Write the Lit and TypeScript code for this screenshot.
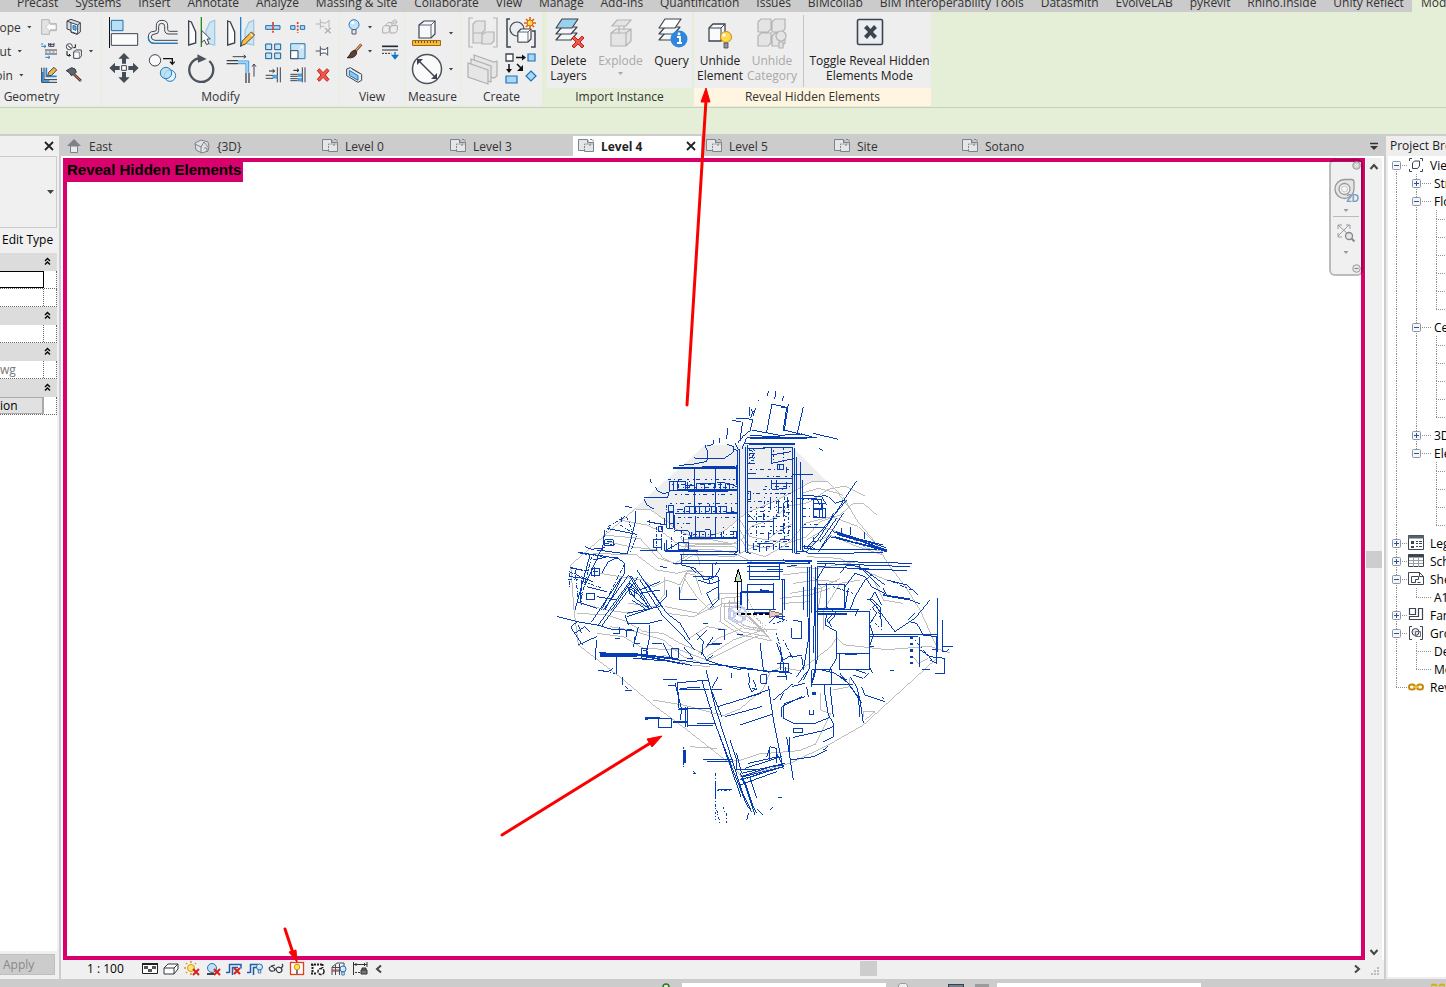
import { LitElement, html, svg, css, nothing } from "lit";
import { customElement, state } from "lit/decorators.js";
import { classMap } from "lit/directives/class-map.js";

type Art = { box: string; size: number; art: unknown };

const cube = (x: number, y: number, s: number, d: number, stroke: string, face: string, top = "#fff") => svg`
  <path d="M${x} ${y + d}l${d} ${-d}h${s}v${s}l${-d} ${d}h${-s}z" fill=${top} stroke=${stroke} stroke-width="1.2" stroke-linejoin="round"/>
  <path d="M${x} ${y + d}h${s}v${s}h${-s}z" fill=${face} stroke=${stroke} stroke-width=".8"/>
  <path d="M${x + s} ${y + d}l${d} ${-d}" stroke=${stroke} stroke-width=".8"/>`;

const sheets = (first: string) => svg`
  <g stroke="#3d4450" stroke-width="1.2" stroke-linejoin="round">
    <path d="M3 23l6-7h15l-6 7z" fill="#f4f6f8"/>
    <path d="M3 17l6-7h15l-6 7z" fill="#f4f6f8"/>
    <path d="M3 11l6-9h16l-6 9z" fill=${first}/>
  </g>`;

const cross = (x: number, y: number, s: number, c = "#d8201c") => svg`
  <path d="M${x} ${y}l${s} ${s}m0 ${-s}l${-s} ${s}" stroke=${c} stroke-width=${s > 6 ? 3 : 2} fill="none"/>`;

const bulb = (x: number, y: number, r: number, c: string, line: string) => svg`
  <circle cx=${x} cy=${y} r=${r} fill=${c} stroke=${line} stroke-width="1"/>
  <path d="M${x - r / 2.4} ${y + r}h${r / 1.2}v${r}h${-r / 1.2}z" fill="#eceff2" stroke=${line} stroke-width=".9"/>
  <circle cx=${x - r / 3} cy=${y - r / 3} r=${r / 3.5} fill="#fff"/>`;

const icons: Record<string, Art> = {
  cope: { box: "117 51 60 60", size: 20, art: svg`<g fill="#e3e3e3" stroke="#b4b4b4" stroke-width="3"><path d="M125 59h23v12h21v21h-21v11h-23z"/><path d="M168 74h-17v-7l-14 14 14 14v-7h17z" fill="#fff" stroke-width="2"/></g>` },
  cutface: { box: "192 51 60 60", size: 20, art: svg`<g stroke="#3d4450" stroke-width="3" stroke-linejoin="round"><path d="M201 63l12-5 28 10v28l-10 7-18-6v-6l-12-4z" fill="#d9dde2"/><path d="M213 68l20 7v27l-20-7z" fill="#fff"/><path d="M219 76l9 3v12l-9-3z" fill="#5fb4f2" stroke="#1b74bb"/><path d="M201 63l12 5M233 75l8-7"/></g>` },
  cut: { box: "117 123 60 60", size: 20, art: svg`<path d="M124 139h14m-5-4l5 4-5 4M136 172h14m-5-4l5 4-5 4" stroke="#1e7fd0" stroke-width="3" fill="none"/><path d="M126 129v6" stroke="#1e7fd0" stroke-width="3"/><path d="M146 129v10h16v-10M146 133h16M152 129v10" stroke="#3d4450" stroke-width="3" fill="none"/><path d="M135 150h36M135 162h36" stroke="#3d4450" stroke-width="3"/><path d="M135 156h36" stroke="#3d4450" stroke-width="2" stroke-dasharray="7 4"/>` },
  joinroof: { box: "192 123 60 60", size: 20, art: svg`<circle cx="208" cy="140" r="9" fill="#fff" stroke="#3d4450" stroke-width="3"/><path d="M203 136l10 9M201 153v13h10m-4-4l4 4-4 4M226 133v10h-6" stroke="#111" stroke-width="3" fill="none"/><path d="M221 156l6-6h17v18l-6 7h-17z" fill="#fff" stroke="#3d4450" stroke-width="3"/><path d="M221 156h17v19" stroke="#3d4450" stroke-width="2" fill="none"/>` },
  join: { box: "117 195 60 60", size: 20, art: svg`<path d="M125 203v44h46M132 203v36h39" stroke="#2a333e" stroke-width="3" fill="none"/><path d="M128 216v27h20M139 203v26h31" stroke="#2386d4" stroke-width="5" fill="none"/><path d="M143 228l3-11 16-15 8 8-15 16z" fill="#f4b64b" stroke="#3d4450" stroke-width="3"/>` },
  demolish: { box: "192 195 60 60", size: 20, art: svg`<path d="M199 212l16-9 10 4 4 10-15 10-5-8z" fill="#5b636e" stroke="#2e353f" stroke-width="3"/><path d="M220 221l23 22" stroke="#5b3b32" stroke-width="8"/><path d="M220 221l23 22" stroke="#c9785b" stroke-width="3"/>` },
  align: { box: "324 51 96 96", size: 32, art: svg`<path d="M328.500 51v93" stroke="#111" stroke-width="3"/><path d="M334 61h35v31h-35z" fill="#b9dff5" stroke="#1e6fae" stroke-width="3"/><path d="M334 101h79v35h-79z" fill="#fafafa" stroke="#3d4450" stroke-width="3"/>` },
  offset: { box: "441 51 96 96", size: 32, art: svg`<g fill="none"><path d="M533 94h-24q-6 0-6-6V77q0-16-17-16t-17 16v13q0 4-7 4-17 0-17 17 0 19 18 19h70" stroke="#414953" stroke-width="3"/><path d="M533 102h-26q-13 0-13-13V79q0-9-9-9t-9 9v13q0 10-11 10-11 0-11 9t11 10h68" stroke="#414953" stroke-width="3"/><path d="M445 111q0 19 18 19h70" stroke="#1e7fbf" stroke-width="4"/></g>` },
  mirror: { box: "558 51 96 96", size: 32, art: svg`<path d="M566 63l8 3 13 30v33l-21 6z" fill="#fcfcfc" stroke="#3d4450" stroke-width="4"/><path d="M644 61l-14 6-12 25v38l26 5z" fill="#cfe6f2" stroke="#9dcbe4" stroke-width="4"/><path d="M604 51v90" stroke="#2e8b1e" stroke-width="4"/><path d="M605 91v37l8-8 7 14 7-4-6-13h10z" fill="#fff" stroke="#3d4450" stroke-width="3"/>` },
  mirrordraw: { box: "675 51 96 96", size: 32, art: svg`<path d="M683 63l8 3 13 30v33l-21 6z" fill="#fcfcfc" stroke="#3d4450" stroke-width="4"/><path d="M761 61l-14 6-12 25v38l26 5z" fill="#cfe6f2" stroke="#9dcbe4" stroke-width="4"/><path d="M722 51v90" stroke="#1e7fd0" stroke-width="4"/><path d="M722 138l5-15 27-27 10 9-28 27z" fill="#f7c046" stroke="#5b3d1e" stroke-width="3"/><path d="M750 100l9 9" stroke="#fff" stroke-width="3"/>` },
  move: { box: "324 159 96 96", size: 32, art: svg`<path d="M372 159l17 17h-11v15h-12v-15h-11zM372 249l17-17h-11v-16h-12v16h-11zM328 204l17-16v10h14v12h-14v10zM416 204l-17-16v10h-14v12h14v10z" fill="#434b56"/><path d="M365 197h14v14h-14z" fill="#fff" stroke="#3d4450" stroke-width="3"/>` },
  copy: { box: "441 159 96 96", size: 32, art: svg`<circle cx="465" cy="181" r="17" fill="#fafafa" stroke="#3d4450" stroke-width="3"/><path d="M489 176h28v14m-7-5l7 8 7-8" fill="none" stroke="#111" stroke-width="4"/><circle cx="510" cy="227" r="17" fill="#e5f4fc" stroke="#1e7fbf" stroke-width="3"/><circle cx="498" cy="219" r="17" fill="#b5dcf2" fill-opacity=".8" stroke="#1e7fbf" stroke-width="3"/>` },
  rotate: { box: "558 159 96 96", size: 32, art: svg`<path d="M594 175a36 36 0 1 0 34 8" fill="none" stroke="#4b535e" stroke-width="7"/><path d="M592 163l28 14-26 11z" fill="#4b535e"/>` },
  trimcorner: { box: "675 159 96 96", size: 32, art: svg`<path d="M680 182h34M680 191h34M738 218v31M747 218v31" stroke="#3d4450" stroke-width="4"/><path d="M714 183h32v35M714 191h24v27" fill="none" stroke="#2b8ede" stroke-width="3"/><path d="M714 187h28v31" fill="none" stroke="#9fd2f6" stroke-width="5"/><path d="M698 170h40m-7-5l7 5-7 5M762 230v-37m-6 7l6-8 6 8" fill="none" stroke="#3d4450" stroke-width="3"/>` },
  split: { box: "794 51 60 60", size: 20, art: svg`<path d="M802 77h43v11h-43z" fill="#b5dcf2" stroke="#1e6fae" stroke-width="3"/><path d="M824 66v32" stroke="#e23a2c" stroke-width="5" stroke-dasharray="10 3"/>` },
  splitgap: { box: "870 51 60 60", size: 20, art: svg`<path d="M878 77h13v11h-13zM907 77h13v11h-13z" fill="#b5dcf2" stroke="#1e6fae" stroke-width="3"/><path d="M899 66v32" stroke="#e23a2c" stroke-width="5" stroke-dasharray="6 4"/>` },
  unpin: { box: "944 51 60 60", size: 20, art: svg`<path d="M952 72h14M966 58v28M966 66l10 3h8l8-9v24M966 79h12" fill="none" stroke="#b7b7b7" stroke-width="3"/><path d="M980 84l17 16m0-16l-17 16" stroke="#b0b0b0" stroke-width="4"/>` },
  array: { box: "794 123 60 60", size: 20, art: svg`<path d="M802 132h18v17h-18zM829 132h18v17h-18zM802 159h18v17h-18zM829 159h18v17h-18z" fill="#c5e5f7" stroke="#1b5f93" stroke-width="3"/>` },
  scale: { box: "870 123 60 60", size: 20, art: svg`<path d="M878 131h43v45h-43z" fill="#c5e5f7" stroke="#2b7cb5" stroke-width="3"/><path d="M878 152h22v24h-22z" fill="#fff" stroke="#2b4860" stroke-width="3"/><path d="M904 148l10-10m-8 0h8v8" fill="none" stroke="#fff" stroke-width="3"/>` },
  pin: { box: "944 123 60 60", size: 20, art: svg`<path d="M952 153h14M966 139v29M966 146l8 2h8l6-7v25l-6-7h-8l-8 2" fill="#fff" stroke="#4b535e" stroke-width="3"/>` },
  trim1: { box: "794 195 60 60", size: 20, art: svg`<path d="M802 226h22M802 235h22M837 202v45M846 202v45" stroke="#3d4450" stroke-width="3"/><path d="M824 226h13v8h-13z" fill="#5cb0f0" stroke="#1e7fd0" stroke-width="2"/><path d="M812 213h16m-5-5l6 5-6 5" fill="none" stroke="#222" stroke-width="3"/>` },
  trim2: { box: "870 195 60 60", size: 20, art: svg`<path d="M877 223h22M877 229h22M877 236h22M877 242h22M913 202v45M921 202v45" stroke="#3d4450" stroke-width="3"/><path d="M900 222h12v7h-12zM900 236h12v7h-12z" fill="#5cb0f0" stroke="#1e7fd0" stroke-width="2"/><path d="M886 211h16m-5-5l6 5-6 5" fill="none" stroke="#222" stroke-width="3"/>` },
  remove: { box: "944 195 60 60", size: 20, art: svg`<path d="M957 212l6-6 11 12 12-12 6 6-11 13 11 13-6 6-12-12-11 12-6-6 11-13z" fill="#f0564b" stroke="#c3221b" stroke-width="3"/>` },
  hide: { box: "1034 51 60 60", size: 20, art: svg`<circle cx="1064" cy="74" r="15" fill="#c3e2f8" stroke="#2c78c9" stroke-width="3"/><circle cx="1060" cy="68" r="5" fill="#fff"/><path d="M1058 89h12v13h-12z" fill="#e7eaee" stroke="#545c67" stroke-width="3"/>` },
  override: { box: "1034 123 60 60", size: 20, art: svg`<path d="M1086 133l-19 22" stroke="#6b3a22" stroke-width="8"/><path d="M1085 134l-18 20" stroke="#f0a65e" stroke-width="4"/><path d="M1067 150q-12 3-16 14-3 8-8 9 18 3 26-7 5-7 2-12z" fill="#5b4034" stroke="#362821" stroke-width="3"/>` },
  cutprofile: { box: "1034 195 60 60", size: 20, art: svg`<path d="M1042 207l11-4 34 20v18l-11 6-34-20z" fill="#eef0f3" stroke="#3d4450" stroke-width="3"/><path d="M1050 211l26 16v14l-26-15z" fill="#8cc8f2" stroke="#1b74bb" stroke-width="3"/><path d="M1058 207l22 13" stroke="#3d4450" stroke-width="2"/>` },
  displace: { box: "1140 51 60 60", size: 20, art: svg`<g fill="#ececec" stroke="#adadad" stroke-width="3"><path d="M1158 74l6-6h12v12h-18z"/><path d="M1148 82l6-5h14v15l-5 7h-15z"/><path d="M1170 82l6-5h16v15l-6 7h-16z"/></g><circle cx="1184" cy="66" r="5" fill="none" stroke="#b5b5b5" stroke-width="6" stroke-dasharray="3 2"/>` },
  linework: { box: "1140 123 60 60", size: 20, art: svg`<path d="M1146 139h48" stroke="#222a33" stroke-width="5"/><path d="M1146 150h48" stroke="#222a33" stroke-width="3"/><path d="M1146 160h28" stroke="#222a33" stroke-width="3" stroke-dasharray="6 3"/><path d="M1185 156v16m-8-6l8 10 8-10z" stroke="#1274c4" stroke-width="4" fill="#1274c4"/>` },
  measure: { box: "0 0 32 32", size: 32, art: svg`<path d="M8 8l5-4h11v13l-4 4H8z" fill="#f7f8fa" stroke="#3d4450" stroke-width="1.200"/><path d="M8 8h12v13M20 8l4-4" fill="none" stroke="#3d4450" stroke-width=".8"/><path d="M1.500 23.500h28v5h-28z" fill="#f4bb3c" stroke="#a26a0b" stroke-width="1"/><path d="M4.500 24v2m3-2v2m3-2v2m3-2v2m3-2v2m3-2v2m3-2v2m3-2v2" stroke="#7a4f08"/>` },
  dimension: { box: "0 0 32 32", size: 32, art: svg`<circle cx="16" cy="16" r="14.500" fill="#fafafa" stroke="#4b535e" stroke-width="1.500"/><path d="M7 7l18 18" stroke="#3d4450" stroke-width="1.500"/><path d="M6 6h6l-6 6zM26 26h-6l6-6z" fill="#3d4450"/>` },
  group: { box: "0 0 32 32", size: 32, art: svg`<g fill="#e4e4e4" stroke="#b4b4b4" stroke-width="1.200"><path d="M6 1H2v29h4M26 1h4v29h-4" fill="none"/><path d="M6 7l3-3h9v9l-3 3H6zM6 16h9v10H6zM16 17l3-2h8v9l-3 3h-9V17z"/></g>` },
  creategroup: { box: "0 0 32 32", size: 32, art: svg`<path d="M5 2H2v28h4M27 14h3v16h-4" fill="none" stroke="#3d4450" stroke-width="1.500"/><circle cx="12" cy="12" r="7" fill="#e9edf1" stroke="#3d4450" stroke-width="1.200"/>${cube(13, 12, 10, 3, "#3d4450", "#f9fafb")}<g stroke="#e2600c" stroke-width="1.600"><path d="M25 0v12M19 6h12M21 2l8 8M29 2l-8 8"/></g><circle cx="25" cy="6" r="3" fill="#ffd84d" stroke="#e2600c"/>` },
  assembly: { box: "0 0 32 32", size: 32, art: svg`<g fill="#e6e6e6" stroke="#b0b0b0" stroke-width="1.200"><path d="M7 2l20 7 3-1v15l-3 2L8 19z"/><path d="M4 6l20 7v16L4 22z"/><path d="M1 10l20 7v14L1 24z"/></g>` },
  similar: { box: "0 0 32 32", size: 32, art: svg`<path d="M1 1h7v7H1z" fill="#fff" stroke="#3d4450" stroke-width="1.300"/><path d="M23 1h7v7h-7zM1 23h11v7H1zM26 18l5 5-5 5-5-5z" fill="#a9d6f2" stroke="#1b74bb" stroke-width="1.200"/><path d="M11 4.500h7M4 11v6M12 11l5 5" stroke="#111" stroke-width="1.500"/><path d="M17 1.500l4 3-4 3zM1 16h6l-3 4zM18 12v6h-6z" fill="#111"/>` },
  deletelayers: { box: "0 0 32 32", size: 32, art: svg`${sheets("#9bd0ee")}<path d="M19 21l2-2 4 4 4-4 2 2-4 4 4 4-2 2-4-4-4 4-2-2 4-4z" fill="#f0564b" stroke="#c3221b"/>` },
  explode: { box: "0 0 32 32", size: 32, art: svg`<g fill="#e4e4e4" stroke="#b4b4b4" stroke-width="1.200"><path d="M7 9l5-6h14l-5 6z"/><path d="M6 16l5-4h15v12l-5 5H6zM6 16h15v13M21 16l5-4M14 9v7M19 9v4"/></g>` },
  query: { box: "0 0 32 32", size: 32, art: svg`${sheets("#fff")}<circle cx="23" cy="22" r="8.500" fill="#2f86dd"/><path d="M21 20h3v6m-3 0h5" stroke="#fff" stroke-width="2" fill="none"/><circle cx="23" cy="17" r="1.400" fill="#fff"/>` },
  unhide: { box: "0 0 32 32", size: 32, art: svg`<path d="M5 11l4-4h12v12l-4 5H5z" fill="#f9fafb" stroke="#3d4450" stroke-width="1.300"/><path d="M5 11h12v13M17 11l4-4" fill="none" stroke="#3d4450"/><circle cx="22" cy="20" r="5.500" fill="#ffd94f" stroke="#c98b10"/><circle cx="20" cy="18" r="1.800" fill="#fff"/><path d="M20 26h4v5h-4z" fill="#8f969f" stroke="#3d4450" stroke-width=".8"/>` },
  unhidecat: { box: "0 0 32 32", size: 32, art: svg`<g fill="#e4e4e4" stroke="#b4b4b4" stroke-width="1.200"><path d="M2 5l3-3h10v10l-3 3H2zM16 5l3-3h10v10l-3 3H16zM2 19l3-3h10v10l-3 3H2zM16 19l3-3h10v10l-3 3H16z"/><circle cx="25" cy="19" r="5"/><path d="M23 25h4v6h-4z"/></g>` },
  toggle: { box: "0 0 32 32", size: 32, art: svg`<rect x="3.500" y="2.500" width="25" height="25" rx="1.500" fill="#e9eef3" stroke="#3d4450" stroke-width="1.600"/><path d="M10 11l3-3 3.500 4L20 8l3 3-4 4 4 4-3 3-3.500-4-3.500 4-3-3 4-4z" fill="#3d4450"/>` },
  house: { box: "0 0 16 16", size: 16, art: svg`<path d="M8 1l7 7H1z" fill="#7e8288"/><path d="M4.500 8h7v6.500h-7z" fill="#e8eaec" stroke="#7e8288"/>` },
  box3d: { box: "0 0 16 16", size: 16, art: svg`<path d="M1 5l6-3 7 2 1 4-1 5-6 2-6-3z" fill="#dfe2e5" stroke="#7e8288"/><path d="M1 6l6 3 3-5 4 5M7 9v6M10 10h3v4" fill="none" stroke="#7e8288"/>` },
  plan: { box: "0 0 16 16", size: 16, art: svg`<path d="M.5 1.500h9v3h6v9h-9v-1h-6z" fill="#e3e5e7" stroke="#7e838a"/><path d="M6.500 13v-7h9M10 2v3M12 1.500h3v3M12 8v-2" fill="none" stroke="#7e838a" stroke-dasharray="2 1"/>` },
  views: { box: "0 0 16 16", size: 16, art: svg`<path d="M4 1.500H1.500V4M1.500 12v2.500H4M12 1.500h2.500V4M14.500 12v2.500H12" stroke="#3d4450" fill="none"/><path d="M4.500 6l2-2h5v5l-2 2.500h-5z" fill="#fff" stroke="#3d4450"/>` },
  legend: { box: "0 0 16 16", size: 16, art: svg`<path d="M.5.500h15v14H.5z" fill="#fff" stroke="#3d4450"/><path d="M0 2h16" stroke="#59616d" stroke-width="3"/><path d="M3 6h3v3H3zM3 11h3v2H3z" fill="#3d4450"/><path d="M8 6.500h2m1 0h3M8 8.500h2m1 0h3M8 11.500h2m1 0h3" stroke="#3d4450"/>` },
  schedule: { box: "0 0 16 16", size: 16, art: svg`<path d="M.5 1.500h15v12H.5z" fill="#fff" stroke="#3d4450"/><path d="M0 3h16" stroke="#3d4450" stroke-width="3"/><path d="M1 7.500h14M1 10.500h14M5.500 4v10M10.500 4v10" stroke="#9aa0a8"/>` },
  sheet: { box: "0 0 16 16", size: 16, art: svg`<path d="M.5 1.500h11l4 4v8H.5z" fill="#fff" stroke="#3d4450"/><path d="M11.500 1v4.500h4M3.500 5.500v6h4v-3h3v-3zM9.500 11.500h3" fill="none" stroke="#3d4450"/>` },
  family: { box: "0 0 16 16", size: 16, art: svg`<path d="M1.500 1.500h6v6h-6zM10.500 1.500h4v11h-13v-3h9z" fill="#fff" stroke="#3d4450" stroke-width="1.200"/>` },
  groups: { box: "0 0 16 16", size: 16, art: svg`<path d="M4 1.500H1.500v13H4M12 1.500h2.500v13H12" fill="none" stroke="#3d4450"/><circle cx="7.500" cy="7" r="3.500" fill="#e3e7ea" stroke="#3d4450"/><path d="M7.500 6.500h5v5h-5z" fill="none" stroke="#6a717b"/>` },
  link: { box: "0 0 16 16", size: 16, art: svg`<g fill="none" stroke="#c88a0d" stroke-width="2"><rect x="1" y="5.500" width="6" height="5" rx="2.500"/><rect x="9" y="5.500" width="6" height="5" rx="2.500"/><path d="M5 8h6" stroke="#f2bd35"/></g>` },
  detail: { box: "0 0 16 16", size: 16, art: svg`<path d="M.5 2.500h15v10H.5z" fill="#fff" stroke="#222"/><path d="M0 3h16" stroke="#222" stroke-width="2"/><path d="M2 5h4v3H2zM10 5h4v3h-4zM6 8h4v3H6z" fill="#555"/>` },
  style: { box: "0 0 16 16", size: 16, art: svg`<path d="M1 7l4-4h10v5l-4 5H1z" fill="#fff" stroke="#333a45"/><path d="M1 7h10v6M11 7l4-4" fill="none" stroke="#333a45"/>` },
  sun: { box: "0 0 16 16", size: 16, art: svg`<circle cx="7" cy="7" r="3.500" fill="#ffe77e" stroke="#d79410"/><path d="M7 0v2M7 12v2M0 7h2M2 2l1 1M12 2l-1 1M2 12l1-1" stroke="#d79410" stroke-width="1.500"/>${cross(9, 8, 6)}` },
  shadow: { box: "0 0 16 16", size: 16, art: svg`<circle cx="7" cy="7" r="4.500" fill="#bfe0f7" stroke="#2b6fae"/><path d="M2 13h7" stroke="#444" stroke-width="2"/>${cross(9, 8, 6)}` },
  crop: { box: "0 0 16 16", size: 16, art: svg`<path d="M0 11.500h3M3.500 3v9M3 3.500h12v4M6.500 14V6.500H12" fill="none" stroke="#1d5ea8" stroke-width="1.500"/>${cross(8, 7, 6)}` },
  cropshow: { box: "0 0 16 16", size: 16, art: svg`<path d="M0 11.500h3M3.500 3v9M3 3.500h8M6.500 14V6.500H10" fill="none" stroke="#1d5ea8" stroke-width="1.500"/>${bulb(12.500, 6, 3, "#cfe6fa", "#2b6fae")}` },
  glasses: { box: "0 0 16 16", size: 16, art: svg`<path d="M1 7q3-3 5 0 2 3-1 3-3 1-4-3M8 8q1-3 5-1 2 2 0 4-4 2-5-3M6 8h2M3 5l4-1M13 7q3-2 1-4" fill="none" stroke="#333a45" stroke-width="1.200"/>` },
  reveal: { box: "0 0 16 16", size: 16, art: svg`<rect x="1.500" y="1.500" width="13" height="12" fill="#fff" stroke="#e2401c" stroke-width="1.300"/><circle cx="8" cy="6" r="2.800" fill="#ffe35a" stroke="#d79410"/><path d="M8 9v4" stroke="#777" stroke-width="2"/>` },
  frame: { box: "0 0 16 16", size: 16, art: svg`<path d="M1 3.500h12M2.500 3v9M1 12.500h6M12.500 3v4" stroke="#222" stroke-width="2" stroke-dasharray="2 1"/><path d="M4 5h7v6H4z" fill="#fff"/><circle cx="11" cy="10.500" r="3" fill="#fff" stroke="#222" stroke-width="1.500" stroke-dasharray="3 1"/>` },
  analytic: { box: "0 0 16 16", size: 16, art: svg`<path d="M1 14V6l5-4h7v3M1 6.500h9M4.500 4v10M8.500 3v11M1 10h8" fill="none" stroke="#444c57"/><path d="M1 9h7" stroke="#d33"/>${bulb(12, 8, 3, "#cfe6fa", "#2b6fae")}` },
  constrain: { box: "0 0 16 16", size: 16, art: svg`<path d="M1.500 1v13M15 1v5M1 3.500h14M4 2v3M12.500 2v3" stroke="#333" fill="none"/><path d="M3 11.500h5" stroke="#333" stroke-dasharray="2 1"/><path d="M9 9h6v4H9zM10 9V7h4v2" fill="#777" stroke="#333"/>` },
  wheel: { box: "0 0 28 28", size: 28, art: svg`<path d="M3 12A9.500 9.500 0 0 1 12.500 2.500h7a2.500 2.500 0 0 1 2.500 2.500v7a9.500 9.500 0 0 1-19 0z" fill="#e6e6e6" stroke="#999" stroke-width="1.300"/><circle cx="12.500" cy="12" r="5.500" fill="#f6f6f6" stroke="#999" stroke-width="1.300"/><circle cx="12.500" cy="12" r="3" fill="none" stroke="#c4c4c4"/>` },
  zoomfit: { box: "0 0 20 20", size: 20, art: svg`<path d="M2 2l12 11M13 2L2 13M2 6V2h4M10 2h4v4M2 10v4h4" fill="none" stroke="#9a9a9a"/><circle cx="13" cy="13" r="3.500" fill="#dfe6ee" stroke="#888" stroke-width="1.300"/><path d="M15.500 15.500l3 3" stroke="#888" stroke-width="2"/>` },
};

const icon = (name: string) => {
  const i = icons[name];
  return html`<svg viewBox=${i.box} width=${i.size} height=${i.size} aria-hidden="true" fill="none">${i.art}</svg>`;
};

const ribbonTabs = ["Precast", "Systems", "Insert", "Annotate", "Analyze", "Massing & Site", "Collaborate", "View", "Manage", "Add-Ins", "Quantification", "Issues", "BIMcollab", "BIM Interoperability Tools", "Datasmith", "EvolveLAB", "pyRevit", "Rhino.Inside", "Unity Reflect"];

const docTabs = [
  { label: "East", icon: "house" }, { label: "{3D}", icon: "box3d" }, { label: "Level 0", icon: "plan" },
  { label: "Level 3", icon: "plan" }, { label: "Level 4", icon: "plan" }, { label: "Level 5", icon: "plan" },
  { label: "Site", icon: "plan" }, { label: "Sotano", icon: "plan" },
];

/* Guide codes: v line, t tee, l elbow, b blank, + / - expander; "first" and "last" trim the line above or below */
type Node = { guides: string[]; label?: string; icon?: string };
const kids = (n: number, mid: string): Node[] =>
  Array.from({ length: n }, (_, i) => ({ guides: ["v", mid, i === n - 1 ? "l" : "t"] }));
const tree: Node[] = [
  { guides: ["-first"], label: "Views", icon: "views" },
  { guides: ["v", "+"], label: "Structural Plans" },
  { guides: ["v", "-"], label: "Floor Plans" },
  ...kids(6, "v"),
  { guides: ["v", "-"], label: "Ceiling Plans" },
  ...kids(5, "v"),
  { guides: ["v", "+"], label: "3D Views" },
  { guides: ["v", "-last"], label: "Elevations" },
  ...kids(4, "b"),
  { guides: ["+"], label: "Legends", icon: "legend" },
  { guides: ["+"], label: "Schedules", icon: "schedule" },
  { guides: ["-"], label: "Sheets", icon: "sheet" },
  { guides: ["v", "l"], label: "A101" },
  { guides: ["+"], label: "Families", icon: "family" },
  { guides: ["-"], label: "Groups", icon: "groups" },
  { guides: ["v", "t"], label: "Detail" },
  { guides: ["v", "l"], label: "Model" },
  { guides: ["l"], label: "Revit Links", icon: "link" },
];

const guide = (g: string, depth: number) => {
  const sign = g[0] === "+" || g[0] === "-";
  const top = g !== "b" && !g.includes("first");
  const bottom = g !== "b" && g !== "l" && !g.includes("last");
  return html`<svg class="guide" viewBox="0 0 20 18" width="20" height="18" aria-hidden="true">
    <g stroke="#8f8f8f" stroke-dasharray="1 1" fill="none">
      ${top ? svg`<path d="M8.500 0v9"/>` : nothing}
      ${bottom ? svg`<path d="M8.500 9v9"/>` : nothing}
      ${g !== "v" && g !== "b" ? svg`<path d=${depth ? "M8 9.500h15" : "M8 9.500h12"}/>` : nothing}
    </g>
    ${sign ? svg`<rect x="4.500" y="5.500" width="8" height="8" rx="1" fill="#f5f6f7" stroke="#8a94a3"/>
      <path d="M6 9.500h5" stroke="#2850a8"/>${g[0] === "+" ? svg`<path d="M8.500 7v5" stroke="#2850a8"/>` : nothing}` : nothing}
  </svg>`;
};

const siteMap = svg`
  <g transform="scale(.33333)" stroke-width="3" fill="none">
    <path fill="#eeeeee" d="M465 195H735v15l97 95h-47l-65 35-55 28-75 30-70 57-50 17-55-6-35-18-35-28-45-32h-45l-43 35z"/>
    <g stroke="#bdbdbd">
      <path d="M62 555L255 387L300 388L345 420L380 448L415 466L470 472L520 455L590 398L665 368L720 340L785 305L832 305L880 350L920 420L970 480L1020 560L1070 625L1110 690L1160 800L1160 835L940 1035L835 1095L720 1150L570 1190"/>
      <path d="M62 555L72 690L85 795L215 895L310 975L405 1045L545 1155L575 1190"/>
      <path d="M210 420l80 15 45 20 60 45 40-5 110-2 30-15 30-40 60-20 50-40 60-10 60-40 50-10 60 30"/>
      <path d="M160 465l110 10 55 60 50 15 40-25M170 485l70 15 80 10 20 25 40 20 50-30 120 5 60-30 60-20 40 10 60-20 40-45 60-20 40-35h30l40 35"/>
      <path d="M130 520l130 5 60 45 60 10 40-10 60 25M150 580l60 10 70 10 30 20 40-20 40 15 20-40h50"/>
      <path d="M570 420l30 50 50 10 40-30 40-20M570 450l25 45 60 10 60-40M575 480l20 35 50 15 70-40 50-60 80-20 80 30 60 60M755 340l50-15 60 15 45 60"/>
      <path d="M400 480h90l60 12M400 490h160M405 500h150l20 20M400 508h80l70 10 60 30M440 515l10 40M430 455l-30 60v20M390 470l20 30 30 15"/>
      <path d="M770 480l60-35 60 20 60 40 50 10M770 500l70-35 70 30 90 30M770 530l100 5 80 40 60 25M720 560l80 5 120-20M730 610l70-10 60 5M720 640l90-15 60-30M700 585l80-10M690 655l90-10 60-20M700 670l80-5"/>
      <path d="M400 590l40 60 40 40 40-20M390 640l20-60 25 5 20 60M345 590v50l-30 40-80-10M345 680l100 20 60-50M510 660v-20h60M515 670h55M520 680h50"/>
      <path d="M570 650l-55 5-5 70 60 40 60 10 35 8-75-75M575 665l-50 5v50l50 35 80 15-60-60M580 680l-45 5v30l50 30 60 10-50-50M590 695l-40 5v15l40 25 40 5M540 660v60M555 655v15"/>
      <path d="M80 700l90 5 60 20 50 30 60 5 50 30 70 30M140 760l80 10 60 35 110 5 80 30M180 740l60 10 100 30 60 50 60 20M350 700l80 10 60-30M90 670l80 20 70 10"/>
      <path d="M470 830l80-50 90-30 40 0M475 840l120-60 35-15M445 820l60-45 70-30M480 860l-60-5-80-30M410 780l60-40 60 10"/>
      <path d="M310 960l90 15 120 32 50-20 70-60 20-50 30-15 60 10 90-70 20-28 20 20 130 15 130-10 60 20"/>
      <path d="M812 940l0 50 30 12-20 38-25 52-50 20-120 10-60 20M850 930l50-10v-25M940 1010v-15h35l-30 25M570 1140l-30 5"/>
      <path d="M930 600l-60 10-30 50-20 30v60M790 590l25 35-10 60M970 600l30 60 60 10M1090 830l15 20 30-15M420 1100l80 5"/>
      <path d="M585 640l40 80 30 40M590 690l60 50M575 715l70 30M580 735l50 15" stroke-dasharray="3 3"/>
    </g>
    <g stroke="#063cb4">
      <path d="M598 80v28M604 88l8 20M610 92l-8 22M616 85l-6 22M547 121l25 5M558 114l50 4M578 125l-8 57M608 120l-8 32-20 16-16 20M533 145l-3 32M490 180v12M508 175v14M655 32l-3 17M678 34l-4 22M700 48l-3 14M625 62h2"/>
      <path d="M666 72l44 10-10 68M666 72l-17 88M715 72l-12 78M760 80l-18 80M605 150l85 16 65-4M600 166l90 5M700 150l85 20M790 160l75 18M590 172h210M600 176h170M808 204l12 11M692 82l12 2"/>
      <path d="M465 195l8 20v22h-30l-12-5M388 256l40-3 40-8 5-8 50-2 27-18v-18M470 198l20-5M530 192l20 8M550 205l15 10M555 190l10 20"/>
      <path stroke-width="5" d="M370 265H562M385 331H562M376 401H562M415 475h147M345 513h100M630 630l40 6"/>
      <path d="M455 261h100M434 265V330M497 265V320M358 306h50v25h-50zM370 306v25M384 306v25M404 318h30M412 306v25M440 310h25v18h-25zM465 310h30v18M500 308h26v20M512 308v20M526 310h10l25 10M540 308v22"/>
      <path d="M415 336h120M283 352h70l5-20v-20M300 298l5 12M315 320l8 12 20 10 10-5M433 335V400M497 335v65M283 358l8 17 20 12M356 376h14v20h-14zM350 397h20v48h-20zM358 400v45M404 380h95v20h-95zM420 380v20M436 380v20M450 380v20M468 380v20M484 380v20M505 380h25v18h30M380 390h20M512 380v20M546 380v15"/>
      <path d="M375 404v45M437 408V455M497 410v45M360 430h14M375 452h40l8 20M436 455h30v18h-30zM466 450h15v22M497 452v22M540 455h20v18M390 516h170M390 523h170M385 487h30v22h-30zM325 440h14v16h-14zM310 480h25v22h-25zM270 512h50M290 425l55 10v-20M350 480v30l35-20M425 455v20M450 455v18M515 455v18M345 490v23M400 470v20"/>
      <path d="M370 550H780M395 543h390M600 550h180M563 210V515l-10 6M569 208V518M586 200V515l18 6M592 195V515M598 195h137M586 190h148M575 208l15-35M560 255v60M727 200V518M734 205V518M739 230v290M752 245V510M757 300v210l20 10h30M640 202h90"/>
      <path d="M594 205h50M664 200v50l70-15M664 225l60-10M594 250h20M594 280h25M590 297h140M682 255h20v14h-20zM690 255v14M665 300v28l45-2v-20M665 310h60M594 335h8v25h-12M662 350v40M740 355h60l10 20M730 285h60M755 345l60 5 15 25M680 300v28M710 260v20"/>
      <path d="M790 360h25v30h-25zM790 370h38M790 385h38v28h-38zM818 370v40M808 385v28M755 442h70M630 490v25M620 492h50v18M690 490v20h40M700 430v30M670 415v50M640 400v20M590 425h80v-10h12M592 400l20 20M655 455v25M690 480h30M610 490v20h10M650 500v12M685 360v40M700 370v40M712 350v35"/>
      <path stroke-dasharray="7 11 3 8 12 14" d="M650 290h80M660 340h68M595 365h130M600 382h130M595 410h120M605 440h120M600 462h120M615 485h115M620 500h110M645 320h85M755 360h55M760 385h60M760 410h60M762 435h55M355 300h200M365 315h190M380 324h180M375 345h180M360 372h200M380 395h180M385 412h170M380 430h50M400 465h160M590 342h140M600 270h120M640 330h60M600 395h60M680 398h50M660 452h60"/>
      <path stroke-dasharray="5 7 9 6 3 9" d="M600 208v40M607 212v34M612 206v36M620 400v80M645 350v90M680 350v60M705 340v150M715 360v130M385 300v30M420 302v28M448 370v30M478 372v28M520 440v34M550 440v34M395 440v34M670 210v30M700 205v40"/>
      <path stroke-dasharray="9 4 3 5" d="M598 212h18M600 222h14M598 233h18M604 242h12M290 425l60 10M320 440v70M335 440v70M350 375v70M375 410v45M365 470v40M300 420v20"/>
      <path d="M920 302L800 485l-30 30h-30M890 360L770 505M880 400L805 515M860 415L810 485M830 440l20-40M815 345l20 5 20 20 30-10M760 500h25l10 8M790 470v15h8M765 495v12h20"/>
      <path d="M805 515l35-45 165 38M850 455l160 55M855 470l155 45M860 460l140 35M860 475l150 38M875 445v20M903 440v25M945 455v22M858 455l150 48" />
      <path d="M780 510h200M780 522l220-5M800 543l285 7M800 550l280 10M800 560l270 12M555 550l225-6M735 520h15"/>
      <path stroke-width="5" d="M860 462l70 20 80 30"/>
      <path d="M786 555V700M780 560V860l-20 40M798 560V870l-15 50M803 560v50M786 545q-5 0-14 5M772 560v150"/>
      <path d="M225 378l20 5M215 425v-15M105 500l20 8 40-5M85 517l120 18 18 14v30L165 690M120 525L75 690M257 392v30l-25 100-90-12M165 450l-8 60M170 445l90 18M130 540l44-10M124 565h24v22h-24zM165 480h25v18h-25zM60 562l40 10M60 590l40 5M95 600l-5 70M80 665l60 20M110 620l60 15M155 580l20-35 30-15M105 615l50-110M140 650l60 10M130 575h15M172 485h15M135 560v30"/>
      <path stroke-dasharray="11 5 4 3" d="M62 565l60 8M58 575l70 30M55 600h30M95 600v75M90 520l70 10M175 440l50-30M165 490l30 5M160 470l20-30M125 530l-35 140M225 550l-70 140M210 435l50 30-20 55M100 605l60 20M60 580v40M75 570l10 90M230 410l20 50"/>
      <path d="M160 690l75-103 10 3 60 95M185 690l55-80 30 30 30 50M260 570l75 110M235 625l20 30 40 30M255 630l40 50M245 660l40 25M240 620l15 10v20l-15-8z"/>
      <path d="M395 525v30l40 10 30 35 30-10 15-25M488 550v45M502 545l-5 10M390 620v40h50M470 640l35-20v-30h-30M470 640l20 40M430 590h70M505 610v50l-25 25M330 560l20 2M460 600h18v8M420 560l20 20M445 600l35 12 30-10M475 590l15 10"/>
      <path d="M590 560h100M590 575h110M600 590h90M690 550v50h-90M600 555v45M575 600v80M650 570h50M692 600h12v90M710 560l30-5M700 540l80 2"/>
      <path stroke-width="6" d="M573 637h98M612 700h70"/>
      <path d="M592 615h80v75h-80zM588 690h90M573 635v50"/>
      <path d="M805 615h80v70h-80M830 610v80M800 600l30-50M805 688h120l-10 20M800 690h100l15-40 30-50 20-15M885 620l30-40 30 10 20 30 40 20M870 580l20-25 40 5 60 60M930 555v15h50M945 570l60 45M960 660l15-25 20 40M885 685l10-60M1000 625l10 20 70 15 30 12M1020 650l60 10"/>
      <path stroke-width="5" d="M1000 645l30 5 50 8"/>
    </g>
    <g stroke="#063cb4">
      <path d="M22 710l60 15 60 10 40 12 70 5M82 725l-20 15 15 25 20 30M85 735l10 25M75 760l30-20 15 15M140 780l-5 60M125 725L215 590M145 735L250 590M155 738L265 590M85 795l55-25M240 590l30 50 60-10M270 630l60-25M350 630v20l-30 30-90 30M230 700l100-20M260 640l-30-20M110 640h25v20h-25z"/>
      <path d="M270 600l70 110 60 60 35 40M290 610l60 90 40 30 30 50M225 705l10 30M235 730h60l40-10M265 740l-15 60M300 735v30l-10 50M190 760h20v-20M195 775h15M275 805h16v30h-16zM305 790h30M340 790l20 40M365 805h20v30h-20zM400 800l30 35h-20M280 812h12v16M255 770v20h15M230 770v-20h15"/>
      <path stroke-width="5" d="M150 822h100l150 30M150 828h110M285 1015h45M370 1027h40"/>
      <path d="M200 832v50M145 870l30 5 15-10M217 890v25M225 932h20M148 818l100 5 30 2 180 25 140 15 60 12M248 820l130 15M275 826l150 30M250 835l100 8M467 840l30 10 75 20"/>
      <path d="M440 760l20 25-5 40M470 750l-30 30M490 770l-20 30M455 815l15 25 20-15M470 795h40M485 790h30M505 750h20v30M460 730h15M560 765h20"/>
      <path d="M338 900h42M355 918h20M375 910l20 80-5 30M385 908l90-8M390 925l60-3M382 905l5 80h90l10-5M388 930l90-3M412 980v60M406 980v60M385 990h25M325 1017h40v25h-40zM440 1030h55M415 1038h75"/>
      <path d="M468 870l30 120 45 140 35 110 25 50M455 900l40 130 50 130 45 115 15 20M480 920l35 90M485 925l20-35M485 928h30M503 980l130-40M525 1010l110-30M503 1050l70 200M540 1080l20 60M560 1140v30h60M575 1180l130-30M585 1165l110-35M595 1150l90-20M460 1140h90M470 1146h80"/>
      <path d="M590 1195l30-10 80-25M575 1195l15 30 20 60M600 1195l20 60M560 1120l15 60M595 880l5 30M605 925l15 3M610 900l8 20M545 880v15"/>
      <path stroke-width="9" d="M405 1110v40M290 1010v10"/>
      <path stroke-dasharray="8 5 3 7" d="M402 1100v60M428 1172l10 10M498 1180v140M500 1230l40 2M500 1290l10 40M530 1300v30M520 1280l5 20M430 1180h10M145 870l50 10M215 900l20 30"/>
      <path d="M505 1230h40M498 1210v40"/>
    </g>
    <g stroke="#063cb4">
      <path d="M672 610v80M697 600v120M762 620v70M780 620l-5 160-15 90M795 620l-5 200M803 600v230l-20 90M570 865l80 8 60 5M630 790l10 80M632 885h18v25h-18zM595 910l10 25 15-10M655 918l15 100 30 150M570 960l90-32M570 1035l95-32"/>
      <path d="M655 730l20-20 30 10M675 710h30M730 720l25 5v50h-30v-30M680 790l15 40-5 40M690 800l10 50h-20M700 850h15v25h-15zM705 860l5 40M715 830l40-3M700 840l25-15M665 870l60 10M680 890h30"/>
      <path stroke-width="5" d="M798 695h120M800 702h90M1005 770h100"/>
      <path d="M830 700l-5 35 35 20v80l-25 40M850 700l-20 20 15 20M860 700l-25 30M820 695h140v140M870 820h88v50h-88zM860 820l60 5M960 705v30l10 30-10 30M958 860l10 20M790 870h55v45h-60v-45zM790 915h120M825 915v30l10 60 15 25v40l-30 15M840 920l10 90M815 870l40 10 40 30 40 60"/>
      <path d="M960 660l15 15 60 80 60-40 45-55M965 680l15 20-20 30M950 660h20l20 20 5 60M1010 600l60 15 35 30M960 770h60M960 765h200M1110 770v90M1095 700l-20 20M1080 725l20 5 20 35 40 5v40h-15M1110 810l30 20 45 5v45h-30"/>
      <path d="M1162 655v160M1177 720v95h15M1175 800h35M1190 815l8-8M1140 840l20 10v-45M960 765v35h12M1115 870h25"/>
      <path stroke-width="7" stroke-dasharray="7 12" d="M1085 770v90"/>
      <path stroke-width="10" d="M787 940h12"/>
      <path d="M900 890l20 30 10 40 10 70M890 900l-30-15M910 885l30 10 15-15M935 920l10 25 60 20M995 950l8 8M918 870l30 10M1020 873h12M870 880l40 50M900 920l25 30 5 60"/>
      <path d="M765 950l-60 20q-8 10-5 45l30 15 60 2 50-20M780 990v15h10v-15M730 1045h28v14h-28zM730 1072l90-20 30-12M695 1010v-30l60-30M670 960l60-50M690 960l10-20M740 890l20-30-5-30M725 920l40-10M770 920l5 30M745 910l25-35"/>
      <path d="M710 1070l20 130M720 1070v60M720 1140l70-10 40-20M650 1130l10-30 20 5v45M680 1120l20 40-120 30M570 1200l130-40M572 1190l90-30 40-5M570 1215l110-40M660 1100v40M570 1180l20 40 20 60 10 20M585 1215l30 90M640 1305l-20-20M660 1290l10-10M595 1300l-5 20M685 1252h10M820 1110l15-12"/>
      <path stroke-dasharray="5 6 12 5" d="M670 730l40-10M680 760l10 40M700 780l30 60M960 690l20-20 10 40M965 720l30 30M830 680l30 20M850 620l60 20M1015 600l70 30M1095 780l50 60"/>
    </g>
    <g>
      <circle cx="563" cy="702" r="25" stroke="#c5d0f2" stroke-width="7"/><path d="M542 690l42 24M546 718l30-36" stroke="#c5d0f2" stroke-width="6"/>
      <path d="M563 600v90" stroke="#000" stroke-width="5"/><path d="M563 700v6M572 702h90" stroke="#000" stroke-width="5" stroke-dasharray="14 4"/>
      <path d="M565 568l11 38h-22z" fill="#c4dfc0" stroke="#000"/><path d="M700 702l-42-10v20z" fill="#f5c5c8" stroke="#777"/>
    </g>
  </g>`;

const closeMark = html`<svg width="10" height="10" viewBox="0 0 10 10" aria-hidden="true"><path d="M1 1l8 8M9 1L1 9" stroke="#222" stroke-width="1.800"/></svg>`;

@customElement("app-root")
export class AppRoot extends LitElement {
  static styles = css`
    :host { display: block; font: 12px/15px "Open Sans", "Noto Sans", sans-serif; color: #222; }
    * { box-sizing: border-box; }
    button { font: inherit; color: inherit; background: none; border: 0; padding: 0; margin: 0; }
    svg { display: block; flex: none; }
    .app { position: relative; height: 100vh; min-height: 480px; display: flex; flex-direction: column; overflow: hidden; background: #ccc; }
    .tabs { height: 12px; flex: none; display: flex; align-items: flex-end; overflow: hidden; background: #cbcbcb; color: #333; }
    .tab-list { flex: 1; display: flex; justify-content: space-between; padding: 0 8px 0 17px; }
    .tabs button { height: 19px; line-height: 18px; white-space: nowrap; }
    .tabs .current { width: 34px; flex: none; background: #e5efd7; padding-left: 9px; text-align: left; overflow: hidden; }
    .ribbon { flex: none; height: 96px; display: flex; gap: 1px; background: #e5efd7; border-bottom: 1px solid #c6cfc0; overflow: hidden; }
    .panel { background: #eee; display: flex; flex-direction: column; height: 94px; flex: none; }
    .panel h2 { margin: 0; font: inherit; line-height: 18px; height: 18px; text-align: center; color: #333; }
    .body { flex: 1; padding-top: 3px; display: flex; }
    .body button { display: grid; place-items: center; }
    .geometry { width: 139px; margin-left: -38px; }
    .geometry .names { width: 74px; padding-left: 30px; display: grid; grid-auto-rows: 24px; }
    .geometry .names button { display: flex; align-items: center; gap: 6px; color: #333; }
    .modify { width: 237px; }
    .modify .body { padding-left: 2px; }
    .small { display: grid; grid-template-columns: repeat(3, 25px); grid-auto-rows: 24px; }
    .geometry .small { grid-template-columns: 25px 25px 10px; }
    .large { display: grid; grid-template-columns: repeat(4, 39px); grid-auto-rows: 36px; }
    .view { width: 64px; }
    .view .small { padding-left: 2px; grid-template-columns: 24px 8px 32px; }
    .measure { width: 55px; }
    .measure .large { padding-left: 4px; grid-template-columns: 36px 12px; }
    .create { width: 81px; }
    .create .large { padding-left: 3px; grid-template-columns: 38px 38px; }
    .import { width: 145px; margin-left: 4px; }
    .import h2 { background: #e5efd7; }
    .import .body { display: grid; grid-template-columns: 43px 1fr 41px; }
    .reveal { width: 237px; margin-left: 1px; }
    .reveal h2 { background: #fff5e1; }
    .reveal .body { display: grid; grid-template-columns: 52px 52px 10px 1fr; }
    .body .tool { display: flex; flex-direction: column; align-items: center; gap: 4px; padding-top: 2px; color: #222; white-space: nowrap; }
    .body .tool:disabled { color: #a9a9a9; }
    .rule { width: 1px; background: #c4c4c4; margin: 0 5px; height: 72px; }
    .arrow { width: 5px; height: 3px; background: #444; clip-path: polygon(0 0, 100% 0, 50% 100%); display: block; margin: auto; }
    .geometry .arrow { margin: 0; }
    .tool .muted { background: #a9a9a9; margin: 4px auto; }
    .options { height: 26px; flex: none; background: #e5efd7; }
    .main { flex: 1; min-height: 0; padding-top: 2px; display: grid; grid-template-columns: 59px minmax(0, 1fr) 60px; gap: 2px; }
    .props { background: #f0f0f0; display: flex; flex-direction: column; min-height: 0; }
    .props header { height: 20px; display: flex; justify-content: flex-end; align-items: center; padding-right: 5px; }
    .type { height: 72px; border: solid #ccc; border-width: 1px 1px 1px 0; margin-right: 2px; display: flex; align-items: center; justify-content: flex-end; }
    .type .arrow { width: 7px; height: 4px; margin: 0 2px 0 0; }
    .edit { height: 25px; text-align: left; padding: 0 0 3px 2px; color: #000; white-space: nowrap; }
    .grid { flex: 1; background: #fff; margin-right: 2px; min-height: 0; }
    .group { height: 18px; width: 100%; background: #dcdcdc; display: flex; align-items: center; justify-content: flex-end; padding: 0 6px 2px 0; }
    .row { height: 18px; display: grid; grid-template-columns: 44px 12px; border-bottom: 1px dotted #666; border-right: 1px dotted #666; }
    .cell { border: 0; border-right: 1px dotted #666; padding: 0; width: 100%; height: 17px; font: inherit; color: #777; background: #fff; outline: 0; text-align: left; min-width: 0; }
    .cell.active { border: 1px solid #000; border-left: 0; }
    button.cell { background: #e1e1e1; color: #000; border: 1px solid #aaa; border-right-width: 2px; border-left: 0; }
    .foot { flex: none; padding: 3px 4px 4px 0; }
    .apply { width: 100%; height: 21px; background: #ccc; border: 1px solid #bfbfbf; border-left: 0; color: #888; text-align: left; padding-left: 3px; }
    .docs { display: grid; grid-template-rows: 20px minmax(0, 1fr) 19px; min-width: 0; min-height: 0; }
    .doc-tabs { display: flex; color: #333; }
    .doc { width: 128px; display: flex; align-items: center; padding: 0 5px; gap: 7px; text-align: left; flex: none; }
    .doc span { flex: 1; }
    .doc.on { background: #fff; font-weight: 700; color: #222; }
    .more { margin-left: auto; padding-right: 5px; }
    .sheet { background: #fff; display: grid; grid-template-columns: minmax(0, 1fr) 16px; gap: 1px; padding: 2px 2px 0 2px; min-height: 0; }
    .canvas { position: relative; border: 4px solid #d8006c; min-height: 0; }
    .mode { display: inline-block; background: #d8006c; color: #000; height: 20px; padding: 0 2px 4px 0; font: bold 15px/16px "Liberation Sans", Arial, sans-serif; vertical-align: top; white-space: nowrap; }
    .map { position: absolute; left: 483px; top: 218px; shape-rendering: crispEdges; overflow: visible; }
    .nav { position: absolute; right: -2px; top: -3px; width: 34px; height: 117px; border: 2px solid rgba(0, 0, 0, 0.22); border-radius: 6px; background: rgba(70, 70, 70, 0.08); display: flex; flex-direction: column; align-items: center; padding-top: 16px; }
    .nav button { display: flex; flex-direction: column; align-items: center; position: relative; width: 28px; }
    .nav .two { position: absolute; right: 1px; top: 16px; font: bold 10px/11px "Liberation Sans", sans-serif; color: #7d9cc0; }
    .nav .line { width: 26px; height: 1px; background: #bbb; margin: 4px 0 6px; }
    .nav .arrow { background: #999; margin: 4px auto 0; }
    .nav .line + button .arrow { margin-top: 8px; }
    .nav .dot { position: absolute; right: 0; width: 9px; height: 9px; }
    .nav .close { top: 0; }
    .nav .min { bottom: 1px; }
    .vscroll, .hscroll { background: #f0f0f0; display: flex; align-items: center; justify-content: space-between; }
    .vscroll { flex-direction: column; padding: 4px 0 3px; }
    .vscroll .thumb { width: 16px; height: 17px; background: #cdcdcd; }
    .bar { background: #f0f0f0; display: flex; align-items: center; padding: 0 0 2px 26px; min-width: 0; }
    .scale { width: 55px; text-align: left; color: #000; }
    .controls { display: flex; gap: 5px; height: 16px; }
    .hscroll { flex: 1; align-self: stretch; padding: 0 9px 0 6px; }
    .hscroll .thumb { width: 17px; height: 15px; background: #cdcdcd; }
    .grip { width: 9px; height: 9px; margin: 6px 4px 0 0; }
    .browser { background: #eee; overflow: hidden; padding: 0 0 2px 2px; display: flex; flex-direction: column; min-height: 0; }
    .browser h1 { margin: 0; font: inherit; line-height: 20px; height: 20px; padding-left: 2px; white-space: nowrap; flex: none; }
    .tree { list-style: none; margin: 0; padding: 0; background: #fff; flex: 1; min-height: 0; color: #000; overflow: hidden; }
    .tree li { display: flex; height: 18px; align-items: center; white-space: nowrap; }
    .tree span { padding-left: 6px; flex: none; }
    .guide { overflow: visible; }
    .status { height: 8px; flex: none; overflow: hidden; display: grid; grid-template-columns: 662px 20px 204px 111px 204px 1fr; padding-top: 4px; align-items: start; }
    .status input { width: 100%; height: 22px; border: 0; background: #fff; padding: 0 4px; font: inherit; min-width: 0; }
    .marks { display: flex; justify-content: space-between; padding: 0 7px 0 12px; }
    .marks.end { justify-content: flex-end; padding-right: 1px; }
    .notes { position: absolute; left: 0; top: 0; width: 100%; height: 100%; pointer-events: none; }
  `;

  @state() private current = 4;

  private tool(name: string, label: string) {
    return html`<button aria-label=${label} title=${label}>${icon(name)}</button>`;
  }

  private chevron(d: string) {
    return html`<svg viewBox="0 0 10 10" width="10" height="10" aria-hidden="true"><path d=${d} fill="none" stroke="#444" stroke-width="2"/></svg>`;
  }

  private group() {
    return html`<button class="group" aria-label="Collapse group"><svg width="7" height="8" viewBox="0 0 7 8"><path d="M1 4l2.500-2.500L6 4M1 7.500L3.500 5 6 7.500" fill="none" stroke="#000" stroke-width="1.400"/></svg></button>`;
  }

  private ribbon() {
    const arrow = html`<i class="arrow"></i>`;
    const gap = html`<i></i>`;
    return html`<section class="ribbon">
      <div class="panel geometry"><div class="body">
        <div class="names">${["Cope", "Cut", "Join"].map((t) => html`<button>${t}${arrow}</button>`)}</div>
        <div class="small">
          ${this.tool("cope", "Cope")}${this.tool("cutface", "Split Face")}${gap}
          ${this.tool("cut", "Wall Joins")}${this.tool("joinroof", "Join Roof")}<button aria-label="More joins">${arrow}</button>
          ${this.tool("join", "Paint")}${this.tool("demolish", "Demolish")}${gap}
        </div></div><h2>Geometry</h2></div>
      <div class="panel modify"><div class="body">
        <div class="large">
          ${this.tool("align", "Align")}${this.tool("offset", "Offset")}${this.tool("mirror", "Mirror Pick Axis")}${this.tool("mirrordraw", "Mirror Draw Axis")}
          ${this.tool("move", "Move")}${this.tool("copy", "Copy")}${this.tool("rotate", "Rotate")}${this.tool("trimcorner", "Trim to Corner")}
        </div>
        <div class="small">
          ${this.tool("split", "Split")}${this.tool("splitgap", "Split with Gap")}${this.tool("unpin", "Unpin")}
          ${this.tool("array", "Array")}${this.tool("scale", "Scale")}${this.tool("pin", "Pin")}
          ${this.tool("trim1", "Trim Single")}${this.tool("trim2", "Trim Multiple")}${this.tool("remove", "Delete")}
        </div></div><h2>Modify</h2></div>
      <div class="panel view"><div class="body"><div class="small">
        ${this.tool("hide", "Hide in View")}${arrow}${this.tool("displace", "Displace")}
        ${this.tool("override", "Override Graphics")}${arrow}${this.tool("linework", "Linework")}
        ${this.tool("cutprofile", "Cut Profile")}
      </div></div><h2>View</h2></div>
      <div class="panel measure"><div class="body"><div class="large">
        ${this.tool("measure", "Measure")}${arrow}${this.tool("dimension", "Dimension")}${arrow}
      </div></div><h2>Measure</h2></div>
      <div class="panel create"><div class="body"><div class="large">
        ${this.tool("group", "Group")}${this.tool("creategroup", "Create Group")}${this.tool("assembly", "Assembly")}${this.tool("similar", "Create Similar")}
      </div></div><h2>Create</h2></div>
      <div class="panel import"><div class="body">
        <button class="tool">${icon("deletelayers")}<span>Delete<br>Layers</span></button>
        <button class="tool" disabled>${icon("explode")}<span>Explode<i class="arrow muted"></i></span></button>
        <button class="tool">${icon("query")}<span>Query</span></button>
      </div><h2>Import Instance</h2></div>
      <div class="panel reveal"><div class="body">
        <button class="tool">${icon("unhide")}<span>Unhide<br>Element</span></button>
        <button class="tool" disabled>${icon("unhidecat")}<span>Unhide<br>Category</span></button>
        <div class="rule"></div>
        <button class="tool">${icon("toggle")}<span>Toggle Reveal Hidden<br>Elements Mode</span></button>
      </div><h2>Reveal Hidden Elements</h2></div>
    </section>`;
  }

  private properties() {
    return html`<aside class="props">
      <header><button aria-label="Close properties">${closeMark}</button></header>
      <button class="type" aria-label="Type selector"><i class="arrow"></i></button>
      <button class="edit">Edit Type</button>
      <div class="grid">
        ${this.group()}
        <div class="row"><input class="cell active" aria-label="Base level"></div>
        <div class="row"><input class="cell" aria-label="Base offset"></div>
        ${this.group()}
        <div class="row"><input class="cell" aria-label="Shared site"></div>
        ${this.group()}
        <div class="row"><input class="cell" aria-label="Name" value="wg"></div>
        ${this.group()}
        <div class="row"><button class="cell">ion</button></div>
      </div>
      <div class="foot"><button class="apply" disabled>Apply</button></div>
    </aside>`;
  }

  private documents() {
    const controls = ["detail", "style", "sun", "shadow", "crop", "cropshow", "glasses", "reveal", "frame", "analytic", "constrain"];
    return html`<section class="docs">
      <nav class="doc-tabs">
        ${docTabs.map((t, i) => html`<button class=${classMap({ doc: true, on: i === this.current })} @click=${() => (this.current = i)}>
          ${icon(t.icon)}<span>${t.label}</span>${i === this.current ? closeMark : nothing}</button>`)}
        <button class="more" aria-label="All tabs"><svg width="10" height="8" viewBox="0 0 10 8"><path d="M1 1.500h8" stroke="#333" stroke-width="1.500"/><path d="M1 4h8L5 8z" fill="#333"/></svg></button>
      </nav>
      <div class="sheet">
        <div class="canvas">
          <span class="mode">Reveal Hidden Elements</span>
          <svg class="map" width="410" height="450" viewBox="0 0 410 450" role="img" aria-label="Site plan">${siteMap}</svg>
          <div class="nav">
            <svg class="dot close" viewBox="0 0 9 9"><circle cx="4.500" cy="4.500" r="3.800" fill="#bbb" fill-opacity=".6" stroke="#999"/><path d="M3 3l3 3M6 3L3 6" stroke="#eee"/></svg>
            <button aria-label="Steering wheel">${icon("wheel")}<span class="two">2D</span><i class="arrow"></i></button>
            <div class="line"></div>
            <button aria-label="Zoom">${icon("zoomfit")}<i class="arrow"></i></button>
            <svg class="dot min" viewBox="0 0 9 9"><circle cx="4.500" cy="4.500" r="3.800" fill="#ddd" fill-opacity=".6" stroke="#999"/><path d="M2.500 4.500h4" stroke="#888"/></svg>
          </div>
        </div>
        <div class="vscroll">${this.chevron("M1.500 7L5 3l3.500 4")}<div class="thumb"></div>${this.chevron("M1.500 3L5 7l3.500-4")}</div>
      </div>
      <div class="bar">
        <button class="scale">1 : 100</button>
        <div class="controls">${controls.map((c) => this.tool(c, c))}</div>
        <div class="hscroll">${this.chevron("M7 1.500L3 5l4 3.500")}<div class="thumb"></div>${this.chevron("M3 1.500L7 5l-4 3.500")}</div>
        <svg class="grip" viewBox="0 0 9 9"><path d="M6 0h2v2H6zM3 3h2v2H3zM6 3h2v2H6zM0 6h2v2H0zM3 6h2v2H3zM6 6h2v2H6z" fill="#bdbdbd"/></svg>
      </div>
    </section>`;
  }

  render() {
    return html`<div class="app">
      <nav class="tabs"><div class="tab-list">${ribbonTabs.map((t) => html`<button>${t}</button>`)}</div><button class="current">Modify</button></nav>
      ${this.ribbon()}
      <div class="options"></div>
      <main class="main">
        ${this.properties()}
        ${this.documents()}
        <aside class="browser"><h1>Project Browser</h1>
          <ul class="tree">${tree.map((n) => html`<li>${n.guides.map(guide)}${n.icon ? icon(n.icon) : nothing}${n.label ? html`<span>${n.label}</span>` : nothing}</li>`)}</ul>
        </aside>
      </main>
      <footer class="status">
        <i></i>
        <svg width="8" height="8" viewBox="0 0 8 8"><circle cx="4" cy="4" r="3" fill="#d6f0d0" stroke="#2b7a1e" stroke-width="1.500"/></svg>
        <input aria-label="Active workset">
        <div class="marks"><svg width="10" height="8" viewBox="0 0 10 8"><path d="M.5 8V2l2-1.500h5l2 1.500v6z" fill="#eee" stroke="#999"/></svg><svg width="42" height="8" viewBox="0 0 42 8"><path d="M0 1h16v7H0z" fill="#39424f"/><path d="M1 3h14" stroke="#aebccb"/><path d="M27 1h14v7H27z" fill="#9b9b9b"/></svg></div>
        <input aria-label="Design option">
        <div class="marks end"><svg width="14" height="8" viewBox="0 0 14 8"><path d="M0 3q3-3 6 0M8 3q3-3 6 0M1 5h12" fill="none" stroke="#e0a90c" stroke-width="2"/></svg></div>
      </footer>
      <svg class="notes" aria-hidden="true">
        <g stroke="#fb0000" stroke-width="3" fill="#fb0000">
          <path d="M687 405L706 100M502 835L652 742M285 929l8 24" stroke-linecap="round"/>
          <path d="M706 88l-5 14h9zM662 736l-10 11-5-8zM297 962l-8-10 7-2z" stroke-width="1"/>
        </g>
      </svg>
    </div>`;
  }
}
